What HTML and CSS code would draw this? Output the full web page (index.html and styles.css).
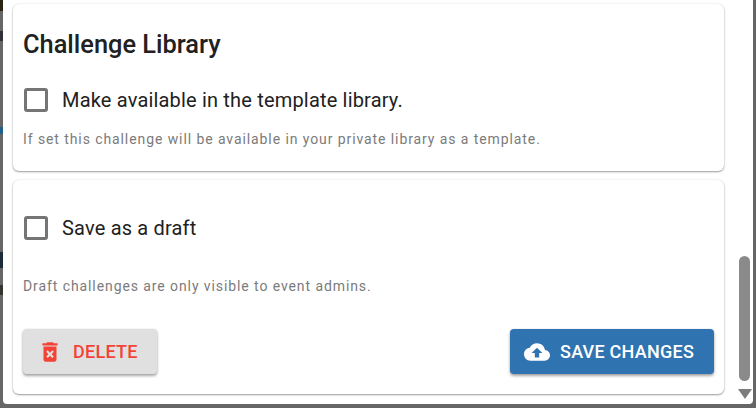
FILE: index.html
```html
<!DOCTYPE html>
<html lang="en">
<head>
    <meta charset="UTF-8">
    <meta name="viewport" content="width=device-width, initial-scale=1.0">
    <title>Edit Challenge</title>
    <link rel="stylesheet" href="styles.css">
</head>
<body>
    <div class="backdrop-bits">
        <span class="bit bit-a"></span>
        <span class="bit bit-b"></span>
        <span class="bit bit-c"></span>
        <span class="bit bit-d"></span>
        <span class="bit bit-e"></span>
    </div>
    <div class="dialog">
        <div class="dialog-content">
            <section class="card card-library">
                <h2 class="card-title">Challenge Library</h2>
                <label class="check-row">
                    <span class="check-box"></span>
                    <span class="check-label">Make available in the template library.</span>
                </label>
                <p class="helper helper-library">If set this challenge will be available in your private library as a template.</p>
            </section>
            <section class="card card-draft">
                <label class="check-row">
                    <span class="check-box"></span>
                    <span class="check-label">Save as a draft</span>
                </label>
                <p class="helper helper-draft">Draft challenges are only visible to event admins.</p>
                <div class="actions">
                    <button class="btn btn-delete">
                        <svg class="btn-icon" viewBox="0 0 24 24" width="26" height="26">
                            <path fill="#f44336" fill-rule="evenodd" d="M6 19c0 1.1.9 2 2 2h8c1.1 0 2-.9 2-2V7H6v12zm2.46-7.12 1.41-1.41L12 12.59l2.12-2.12 1.41 1.41L13.41 14l2.12 2.12-1.41 1.41L12 15.41l-2.12 2.12-1.41-1.41L10.59 14l-2.13-2.12zM15.5 4l-1-1h-5l-1 1H5v2h14V4z"/>
                        </svg>
                        Delete
                    </button>
                    <button class="btn btn-save">
                        <svg class="btn-icon" viewBox="0 0 24 24" width="26" height="26">
                            <path fill="#fff" d="M19.35 10.04C18.67 6.59 15.64 4 12 4 9.11 4 6.6 5.64 5.35 8.04 2.34 8.36 0 10.91 0 14c0 3.31 2.69 6 6 6h13c2.76 0 5-2.24 5-5 0-2.64-2.05-4.78-4.65-4.96zM14 13v4h-4v-4H7l5-5 5 5h-3z"/>
                        </svg>
                        Save Changes
                    </button>
                </div>
            </section>
        </div>
        <div class="scrollbar">
            <div class="scroll-thumb"></div>
            <div class="scroll-arrow"></div>
        </div>
    </div>
</body>
</html>
```

FILE: styles.css
```css
html, body {
    margin: 0;
    height: 408px;
    overflow: hidden;
}
body {
    font-family: Roboto, Arial, sans-serif;
    background-color: #666;
    color: #212121;
    padding: 0 3px 4px 3px;
    box-sizing: border-box;
    position: relative;
}
.backdrop-bits .bit {
    position: absolute;
    left: 0;
    width: 3px;
}
.bit-a { top: 0; height: 11px; background-color: #2b2415; }
.bit-b { top: 31px; height: 10px; background-color: #2f3038; }
.bit-c { top: 127px; height: 7px; background-color: #1f5f8a; }
.bit-d { top: 252px; height: 16px; background-color: #1d2a3a; }
.bit-e { top: 285px; height: 10px; background-color: #35352f; }

.dialog {
    display: flex;
    height: 404px;
    background-color: #fff;
    border-radius: 0 0 4px 4px;
    overflow: hidden;
}
.dialog-content {
    width: 733px;
    padding: 4px 12px 0 10px;
    box-sizing: border-box;
}
.card {
    background-color: #fff;
    border-radius: 6px;
    box-shadow: 0 1px 2px rgba(0, 0, 0, 0.38), 0 0 2px rgba(0, 0, 0, 0.1);
    padding: 0 10px;
    box-sizing: border-box;
}
.card-library {
    height: 167px;
    padding-top: 26px;
    margin-bottom: 9px;
}
.card-draft {
    height: 214px;
    padding-top: 34px;
}
.card-title {
    margin: 0;
    font-size: 25.4px;
    font-weight: 500;
    line-height: 29px;
}
.check-row {
    display: flex;
    align-items: center;
    gap: 14px;
    height: 28px;
    padding-left: 1px;
}
.card-library .check-row {
    margin-top: 27px;
}
.check-box {
    width: 18px;
    height: 18px;
    border: 3px solid #757575;
    border-radius: 3px;
}
.check-label {
    font-size: 20px;
    line-height: 28px;
    letter-spacing: 0.18px;
}
.helper {
    margin: 0;
    font-size: 14px;
    line-height: 20px;
    letter-spacing: 0.91px;
    color: #7b7b7b;
}
.helper-library {
    margin-top: 15px;
}
.helper-draft {
    margin-top: 34px;
}
.actions {
    display: flex;
    justify-content: space-between;
    margin-top: 33px;
}
.btn {
    display: flex;
    align-items: center;
    height: 45px;
    border: none;
    border-radius: 4px;
    font-family: inherit;
    font-size: 18px;
    font-weight: 500;
    letter-spacing: 0.25px;
    text-transform: uppercase;
    box-shadow: 0 2px 3px rgba(0, 0, 0, 0.35), 0 0 2px rgba(0, 0, 0, 0.12);
    cursor: pointer;
}
.btn-delete {
    width: 134px;
    padding: 0 0 0 14px;
    gap: 10px;
    background-color: #e0e0e0;
    color: #f44336;
}
.btn-save {
    width: 204px;
    padding: 0 0 0 14px;
    gap: 10px;
    background-color: #3073b1;
    color: #fff;
}
.btn-icon {
    flex-shrink: 0;
}
.scrollbar {
    width: 17px;
    display: flex;
    flex-direction: column;
    align-items: center;
}
.scroll-thumb {
    width: 11px;
    height: 125px;
    margin-top: 256px;
    background-color: #8a8a8a;
    border-radius: 6px;
}
.scroll-arrow {
    margin-top: 8px;
    width: 0;
    height: 0;
    border-left: 7px solid transparent;
    border-right: 7px solid transparent;
    border-top: 10px solid #7d7d7d;
}
```
